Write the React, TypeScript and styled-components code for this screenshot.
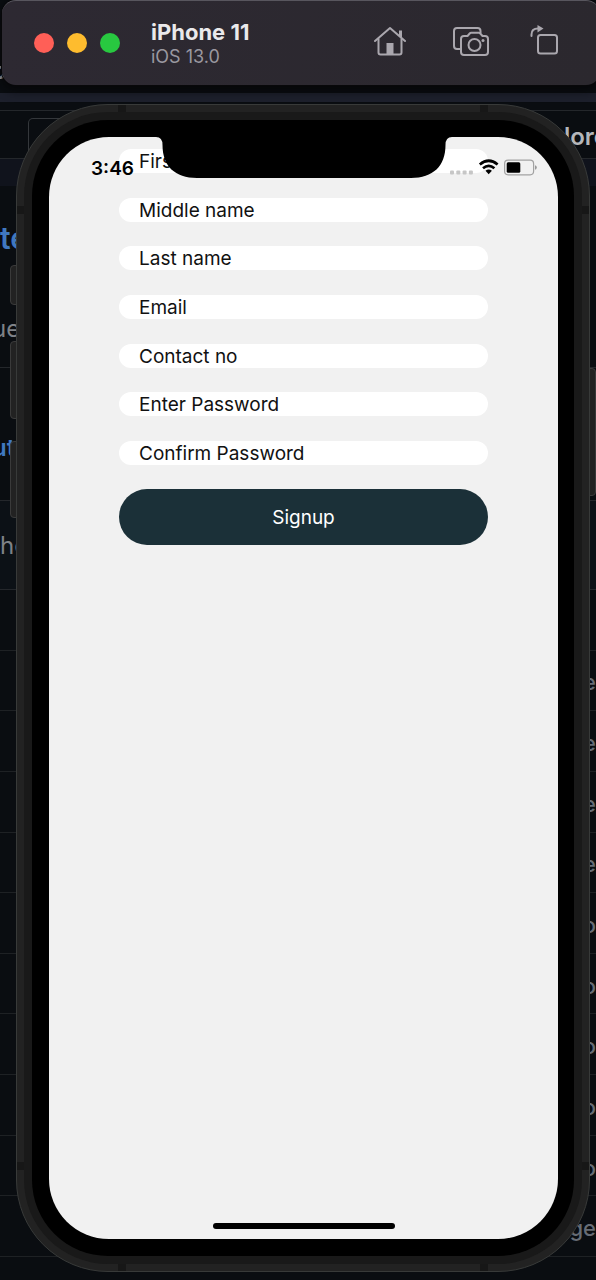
import React from "react";
import styled, { createGlobalStyle } from "styled-components";

const GlobalStyle = createGlobalStyle`
  * { box-sizing: border-box; }
  body {
    margin: 0;
    background: #0a0d11;
    font-family: Inter, "Liberation Sans", sans-serif;
    -webkit-font-smoothing: antialiased;
    overflow-x: hidden;
  }
`;

const Desktop = styled.div`
  position: relative;
  min-height: 100vh;
  overflow: hidden;
  isolation: isolate;
`;

/* Browser page that lies behind the simulator */
const Backdrop = styled.div`
  position: absolute;
  inset: 0;
  z-index: -1;
  display: flex;
  flex-direction: column;
  background: #0a0d11;
`;

const Band = styled.div<{ $height: number; $fill?: string; $line?: boolean }>`
  flex: none;
  display: flex;
  align-items: center;
  justify-content: space-between;
  height: ${(p) => p.$height}px;
  background: ${(p) => p.$fill ?? "transparent"};
  border-bottom: ${(p) => (p.$line ? "1px solid #24272b" : "0")};
`;

const Peek = styled.span<{ $tone?: "link" | "bright"; $size?: number; $cut?: boolean }>`
  margin-left: ${(p) => (p.$cut ? -8 : 0)}px;
  font-size: ${(p) => p.$size ?? 24}px;
  font-weight: ${(p) => (p.$tone ? 600 : 400)};
  color: ${(p) => (p.$tone === "link" ? "#4078c0" : p.$tone === "bright" ? "#b4b6ba" : "#7f8287")};
`;

const PeekEnd = styled(Peek)`
  margin: 4px -12px 0 auto;
`;

const SearchBox = styled.div`
  align-self: flex-end;
  width: 200px;
  height: 40px;
  margin-left: 28px;
  border: 1px solid #34373b;
  border-bottom: 0;
  border-radius: 5px 5px 0 0;
`;

const TableRows = styled.div`
  flex: none;
  display: grid;
  grid-template-rows: repeat(11, 1fr);
  height: 667px;
`;

const TableRow = styled.div`
  display: flex;
  align-items: center;
  justify-content: flex-end;
  padding-top: 4px;
  border-bottom: 1px solid #1e2124;
  color: #666c75;
  font-size: 22px;
  font-weight: 500;
`;

/* Simulator toolbar */
const Toolbar = styled.header`
  position: relative;
  display: flex;
  align-items: center;
  height: 85px;
  margin: 0 -4px 0 2px;
  padding: 0 42px 0 32px;
  border-top: 1px solid #58565e;
  border-radius: 14px;
  background: linear-gradient(100deg, #2d2932, #2b282e);
  box-shadow: 0 0 0 1px #08080a, 0 4px 12px #050507;
`;

const Lights = styled.div`
  display: flex;
  gap: 13px;
`;

const Light = styled.button<{ $color: string }>`
  width: 20px;
  height: 20px;
  padding: 0;
  border: 0;
  border-radius: 50%;
  background: ${(p) => p.$color};
`;

const Titles = styled.div`
  flex: 1;
  padding: 2px 0 0 31px;
`;

const DeviceName = styled.h1`
  margin: 0;
  font-size: 22px;
  line-height: 25px;
  font-weight: 700;
  color: #eae9eb;
`;

const SystemName = styled.p`
  margin: 0;
  font-size: 18px;
  line-height: 24px;
  color: #9a98a0;
`;

const Tools = styled.div`
  display: flex;
  gap: 41px;
  padding-bottom: 5px;
`;

const Tool = styled.button`
  display: flex;
  padding: 0;
  border: 0;
  background: none;
  color: #aaa7ae;
`;

/* Device */
const Phone = styled.main`
  position: relative;
  margin: 19px 6px 7px 16px;
  border: 1px solid #383a39;
  border-radius: 92px;
  background: #222;
  padding: 7px;
`;

const Bezel = styled.div`
  padding: 8px;
  border-radius: 84px;
  background: #191919;
`;

const Glass = styled.div`
  padding: 17px 16px 17px 17px;
  border-radius: 76px;
  background: #000;
`;

const Screen = styled.div`
  position: relative;
  min-height: 1102px;
  padding: 12px 70px;
  border-radius: 60px;
  background: #f1f1f1;
`;

const Antenna = styled.span<{ $side: "top" | "bottom" | "left" | "right"; $far?: boolean }>`
  position: absolute;
  background: #171717;
  ${(p) =>
    p.$side === "top" || p.$side === "bottom"
      ? `width: 8px; height: 7px; ${p.$side}: 0; ${p.$far ? "right" : "left"}: 101px;`
      : `width: 7px; height: 8px; ${p.$side}: 0; ${p.$far ? "bottom" : "top"}: 101px;`}
`;

const SideKey = styled.span<{ $top: number; $height: number; $right?: boolean }>`
  position: absolute;
  z-index: -1;
  top: ${(p) => p.$top}px;
  ${(p) => (p.$right ? "right" : "left")}: -7px;
  width: 12px;
  height: ${(p) => p.$height}px;
  border: 1px solid #3a3a3a;
  border-radius: 4px;
  background: #222;
`;

const Notch = styled.svg`
  position: absolute;
  top: 0;
  left: 50%;
  transform: translateX(-50%);
`;

const StatusBar = styled.div`
  position: absolute;
  top: 16px;
  left: 42px;
  right: 20px;
  display: flex;
  align-items: center;
  justify-content: space-between;
  height: 30px;
`;

const Clock = styled.time`
  font-size: 19px;
  font-weight: 600;
  color: #000;
`;

const HomeBar = styled.span`
  position: absolute;
  bottom: 10px;
  left: 50%;
  width: 182px;
  height: 6px;
  border-radius: 3px;
  background: #000;
  transform: translateX(-50%);
`;

const Form = styled.form`
  display: flex;
  flex-direction: column;
  gap: 24px;
`;

const Fields = styled.div`
  display: flex;
  flex-direction: column;
  justify-content: space-between;
  height: 316px;
`;

const Field = styled.input`
  width: 100%;
  height: 24px;
  padding: 1px 20px 0;
  border: 0;
  border-radius: 12px;
  outline: 0;
  background: #fff;
  font: 400 19px/23px Inter, "Liberation Sans", sans-serif;
  color: #111;
  &::placeholder { color: #111; opacity: 1; }
`;

const Submit = styled.button`
  height: 56px;
  padding: 2px 0 0;
  border: 0;
  border-radius: 28px;
  background: #1b3038;
  font: 400 19px/24px Inter, "Liberation Sans", sans-serif;
  color: #fff;
`;

const HomeIcon = () => (
  <svg width="34" height="32" viewBox="1 0 34 32" fill="none" stroke="currentColor" strokeWidth="2" strokeLinecap="round" strokeLinejoin="round">
    <path d="M2 16 17 3l15 13" />
    <path d="M5.500 14v13.500q0 2 2 2h19q2 0 2-2V14" />
    <path d="M27.500 12V5.500" strokeWidth="3" strokeLinecap="butt" />
    <path d="M13.500 29V18h7v11z" fill="currentColor" stroke="none" />
  </svg>
);

const CameraIcon = () => (
  <svg width="40" height="32" viewBox="-4 -1 40 32" fill="none" stroke="currentColor" strokeWidth="2" strokeLinejoin="round">
    <path d="M8 23H4q-3 0-3-3V5q0-3 3-3h20.500q3 0 3 3v2" />
    <path d="M11 10h3.500l2.200-2.500q.6-.7 1.500-.7h7.600q.9 0 1.500.7L29.500 10H32q3 0 3 3v13q0 3-3 3H11q-3 0-3-3V13q0-3 3-3z" />
    <circle cx="21.500" cy="19" r="6" />
    <circle cx="30" cy="14.500" r="1.500" fill="currentColor" stroke="none" />
  </svg>
);

const RotateIcon = () => (
  <svg width="28" height="32" viewBox="0 0 28 32" fill="none" stroke="currentColor" strokeWidth="2" strokeLinecap="round">
    <rect x="8" y="10" width="19" height="18.500" rx="2.500" />
    <path d="M1.500 11V9.500Q1.500 3.500 8 3.500" />
    <path d="M7.500 0 13.500 3.500 7.500 7.500z" fill="currentColor" stroke="none" />
  </svg>
);

const StatusIcons = () => (
  <svg width="88" height="20" viewBox="0 0 88 20" fill="none">
    <g fill="#c6c6c6">
      <rect x="0" y="12.500" width="4" height="4" rx="1" />
      <rect x="6.300" y="12.500" width="4" height="4" rx="1" />
      <rect x="12.600" y="12.500" width="4" height="4" rx="1" />
      <rect x="18.900" y="12.500" width="4" height="4" rx="1" />
    </g>
    <g stroke="#000" strokeWidth="2.700">
      <path d="M29.800 6.500Q38.700-1 47.600 6.500" />
      <path d="M33 10.200Q38.700 5.400 44.400 10.200" />
    </g>
    <path d="M35.500 12.800Q38.700 10.200 41.900 12.800L38.700 16.200z" fill="#000" />
    <rect x="54.600" y="2.200" width="29" height="14.600" rx="3.500" stroke="#a2a2a2" strokeWidth="1.200" />
    <path d="M85 7.200q1.800.6 1.800 2.300T85 11.800z" fill="#999" />
    <rect x="56.700" y="4.200" width="13.600" height="10.600" rx="1.500" fill="#000" />
  </svg>
);

const fields: { label: string; type: string }[] = [
  { label: "First name", type: "text" },
  { label: "Middle name", type: "text" },
  { label: "Last name", type: "text" },
  { label: "Email", type: "email" },
  { label: "Contact no", type: "tel" },
  { label: "Enter Password", type: "password" },
  { label: "Confirm Password", type: "password" },
];

const rowEnds = ["", "e", "e", "e", "e", "o", "o", "o", "o", "o", "ge"];

export default function App() {
  return (
    <>
      <GlobalStyle />
      <Desktop>
        <Backdrop aria-hidden="true">
          <Band $height={48} />
          <Band $height={45}>
            <Peek $tone="bright" $cut>c</Peek>
          </Band>
          <Band $height={9} $fill="#1d202c" />
          <Band $height={9} $line />
          <Band $height={48} $line>
            <SearchBox />
            <PeekEnd $tone="bright">lore</PeekEnd>
          </Band>
          <Band $height={27} $fill="#10131c" />
          <Band $height={104}>
            <Peek $tone="link" $size={30}>te</Peek>
          </Band>
          <Band $height={78} $line>
            <Peek $cut>ue</Peek>
          </Band>
          <Band $height={26} />
          <Band $height={107} $line>
            <Peek $tone="link" $cut>ut</Peek>
          </Band>
          <Band $height={89} $line $fill="#0c1116">
            <Peek>he</Peek>
          </Band>
          <TableRows>
            {rowEnds.map((end, i) => (
              <TableRow key={i}>{end}</TableRow>
            ))}
          </TableRows>
        </Backdrop>

        <Toolbar>
          <Lights>
            <Light $color="#ff5f57" aria-label="Close" />
            <Light $color="#febc2e" aria-label="Minimize" />
            <Light $color="#28c840" aria-label="Zoom" />
          </Lights>
          <Titles>
            <DeviceName>iPhone 11</DeviceName>
            <SystemName>iOS 13.0</SystemName>
          </Titles>
          <Tools>
            <Tool aria-label="Home"><HomeIcon /></Tool>
            <Tool aria-label="Screenshot"><CameraIcon /></Tool>
            <Tool aria-label="Rotate"><RotateIcon /></Tool>
          </Tools>
        </Toolbar>

        <Phone>
          <SideKey $top={160} $height={40} />
          <SideKey $top={236} $height={78} />
          <SideKey $top={336} $height={77} />
          <SideKey $top={263} $height={128} $right />
          <Antenna $side="top" />
          <Antenna $side="top" $far />
          <Antenna $side="bottom" />
          <Antenna $side="bottom" $far />
          <Antenna $side="left" />
          <Antenna $side="left" $far />
          <Antenna $side="right" />
          <Antenna $side="right" $far />
          <Bezel>
            <Glass>
              <Screen>
                <Form onSubmit={(e) => e.preventDefault()}>
                  <Fields>
                    {fields.map((f) => (
                      <Field key={f.label} type={f.type} placeholder={f.label} aria-label={f.label} />
                    ))}
                  </Fields>
                  <Submit type="submit">Signup</Submit>
                </Form>
                <StatusBar>
                  <Clock>3:46</Clock>
                  <StatusIcons />
                </StatusBar>
                <Notch width="296" height="41" viewBox="0 0 296 41" fill="#000">
                  <path d="M0 0H296Q289.500 0 289.500 8C289.500 29 277 41 255 41H41C19 41 6.500 29 6.500 8Q6.500 0 0 0z" />
                </Notch>
                <HomeBar />
              </Screen>
            </Glass>
          </Bezel>
        </Phone>
      </Desktop>
    </>
  );
}
